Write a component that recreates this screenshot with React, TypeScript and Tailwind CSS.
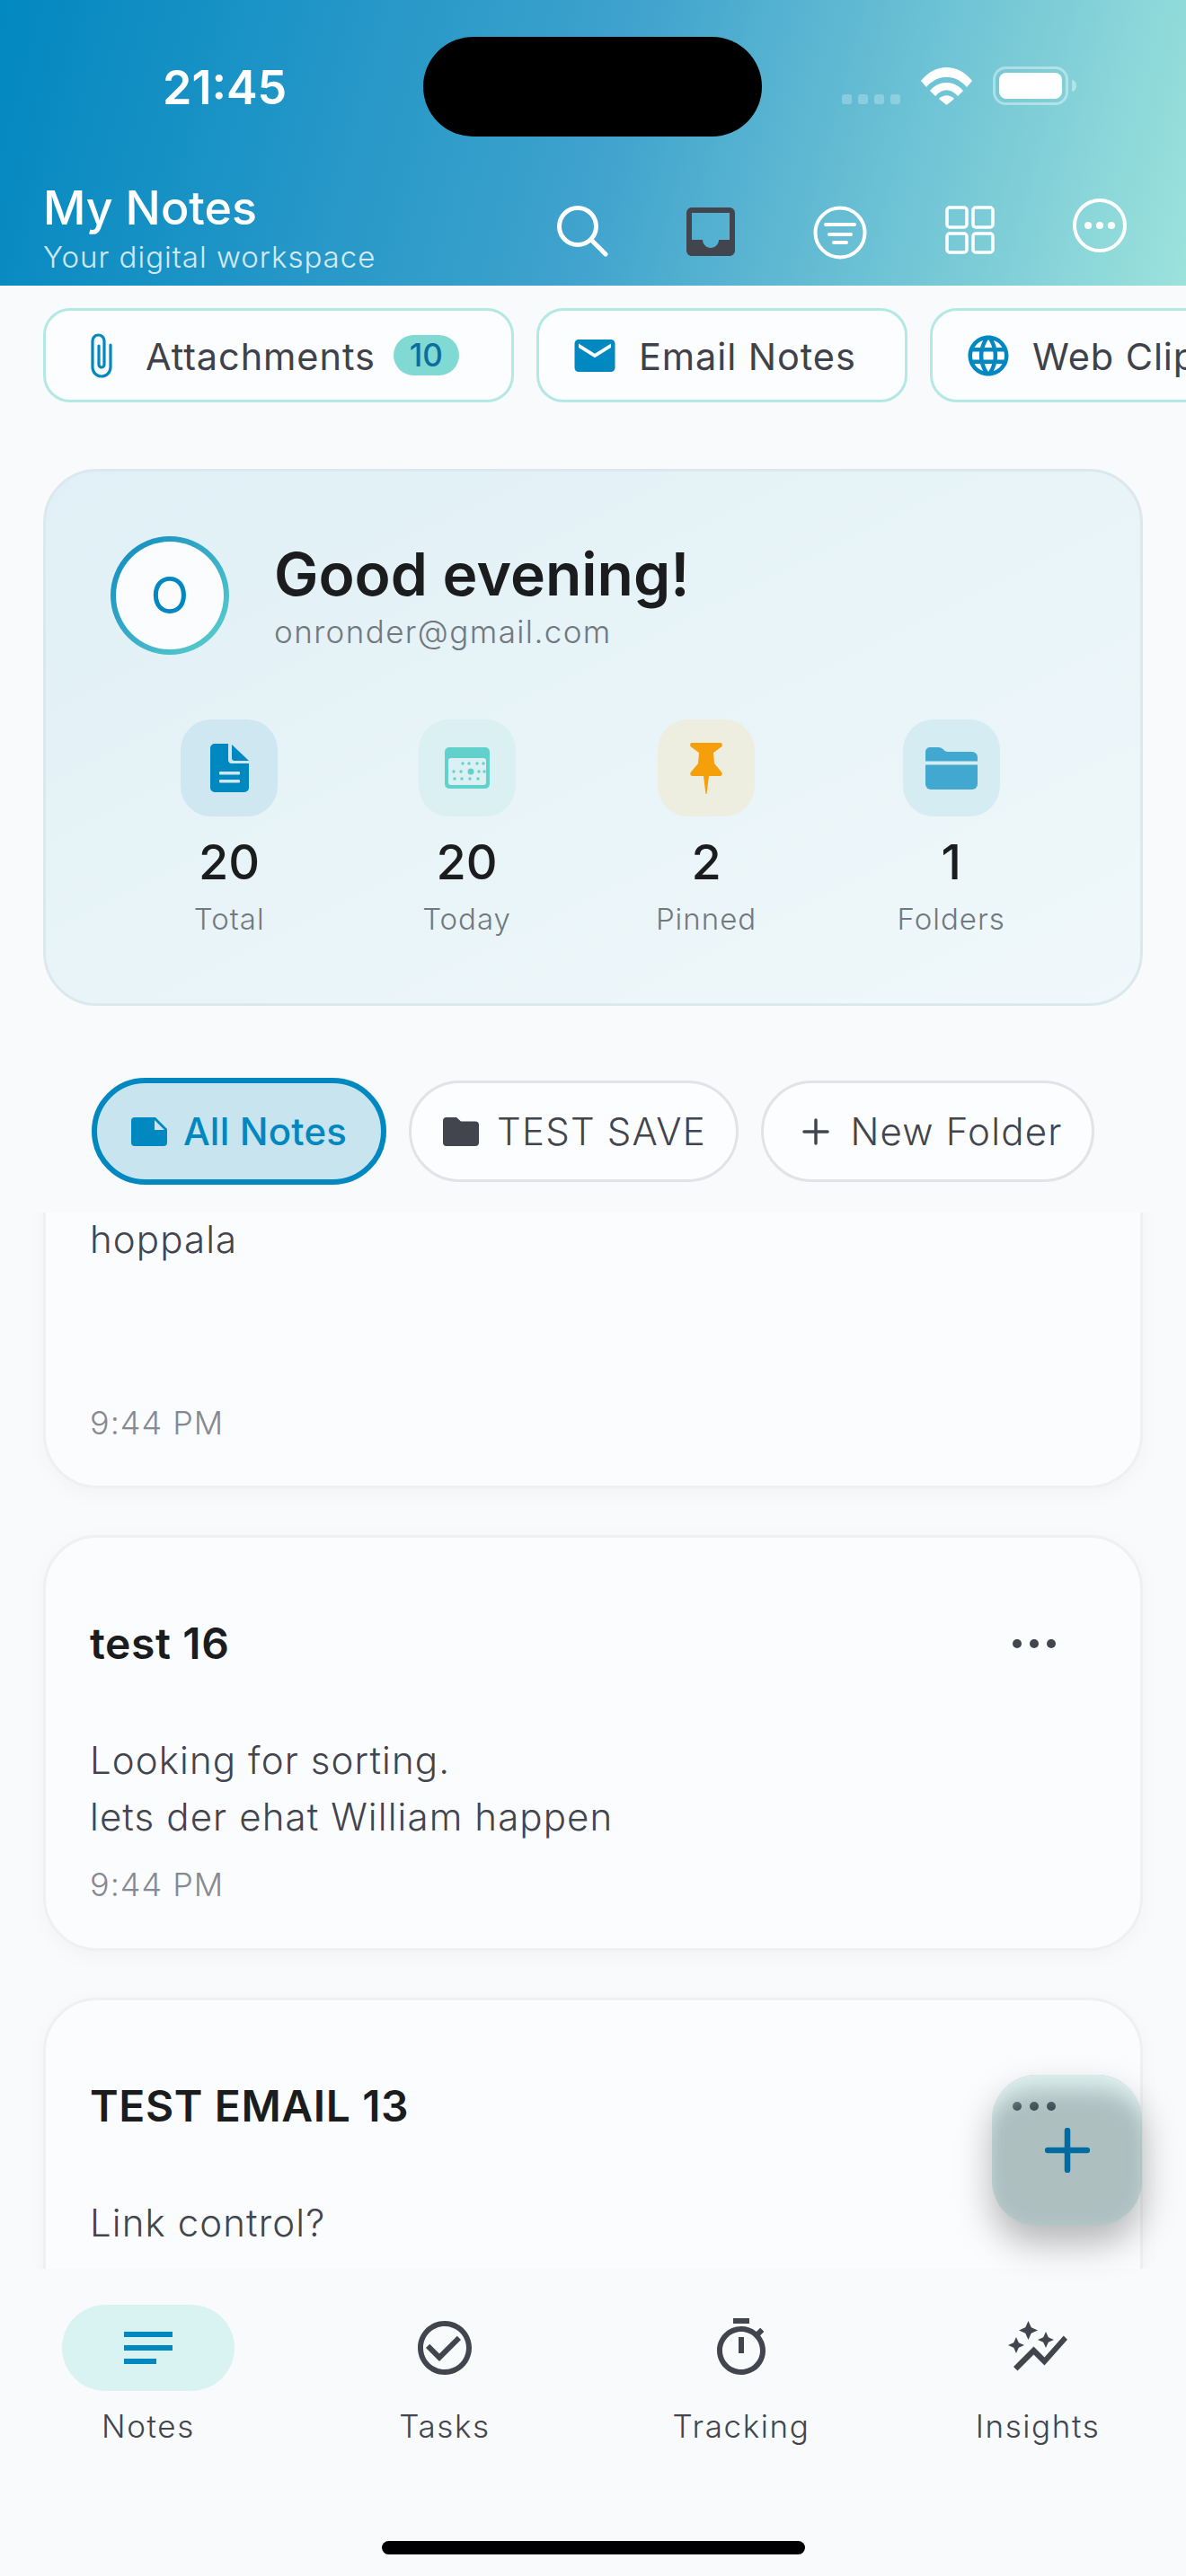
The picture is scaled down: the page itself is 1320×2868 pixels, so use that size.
import type { ReactNode } from 'react';
import { MdAutoGraph, MdCheckCircleOutline, MdEmail, MdInbox, MdLanguage, MdNotes, MdOutlineTimer } from 'react-icons/md';

function PaperclipIcon() {
  return (
    <svg width="24" height="50" viewBox="0 0 24 50" fill="none" stroke="#0288c0" strokeWidth="3.2" strokeLinecap="round">
      <path d="M9 14V35a3 3 0 0 0 6 0V8.5a6.5 6.5 0 0 0-13 0V38a10 10 0 0 0 20 0V13" />
    </svg>
  );
}

function WifiIcon() {
  return (
    <svg width="57" height="42" viewBox="0 0 57 42" fill="#ffffff">
      <path d="M0 15C16-5 41-5 57 15l-6 7C38 7 19 7 6 22Z" />
      <path d="M10 26C20 14 37 14 47 26l-6 6C33 23 24 23 16 32Z" />
      <path d="M20 35c5-5 12-5 17 0l-8.500 7Z" />
    </svg>
  );
}

function BatteryIcon() {
  return (
    <svg width="93" height="43" viewBox="0 0 93 43">
      <rect x="1.500" y="1.500" width="81" height="40" rx="13" fill="none" stroke="#ffffff" strokeOpacity="0.4" strokeWidth="3" />
      <rect x="7" y="7" width="70" height="29" rx="8" fill="#ffffff" />
      <path d="M88 15a5 6 0 0 1 5 6.500 5 6 0 0 1-5 6.500Z" fill="#ffffff" fillOpacity="0.4" />
    </svg>
  );
}

function SearchIcon() {
  return (
    <svg width="57" height="57" viewBox="0 0 57 57" fill="none" stroke="#ffffff" strokeWidth="5" strokeLinecap="round">
      <circle cx="23" cy="23" r="20.500" />
      <path d="M38 38l16 16" />
    </svg>
  );
}

function FilterIcon() {
  return (
    <svg width="60" height="60" viewBox="0 0 60 60" fill="none" stroke="#ffffff" strokeWidth="4" strokeLinecap="round">
      <circle cx="30" cy="30" r="27.500" />
      <path d="M14 21h32M18 32h24M23 41h14" />
    </svg>
  );
}

function GridIcon() {
  return (
    <svg width="55" height="54" viewBox="0 0 55 54" fill="none" stroke="#ffffff" strokeWidth="3.500">
      <rect x="2" y="2" width="22" height="22" rx="3" />
      <rect x="31" y="2" width="22" height="22" rx="3" />
      <rect x="2" y="31" width="22" height="21" rx="3" />
      <rect x="31" y="31" width="22" height="21" rx="3" />
    </svg>
  );
}

function MoreCircleIcon() {
  return (
    <svg width="60" height="60" viewBox="0 0 60 60">
      <circle cx="30" cy="30" r="28" fill="none" stroke="#ffffff" strokeWidth="4" />
      <circle cx="17" cy="30" r="4" fill="#ffffff" />
      <circle cx="30" cy="30" r="4" fill="#ffffff" />
      <circle cx="43" cy="30" r="4" fill="#ffffff" />
    </svg>
  );
}

function DocIcon() {
  return (
    <svg width="43" height="54" viewBox="0 0 43 54" fill="#0288c0">
      <path d="M5 0H20V18a4 4 0 0 0 4 4H43V49a5 5 0 0 1-5 5H5a5 5 0 0 1-5-5V5a5 5 0 0 1 5-5Z" />
      <path d="M24 1L43 19H27a3 3 0 0 1-3-3Z" />
      <rect x="10" y="31" width="23" height="3.500" rx="1" fill="#cfe7f1" />
      <rect x="10" y="40" width="23" height="3.500" rx="1" fill="#cfe7f1" />
    </svg>
  );
}

function CalendarIcon() {
  const dots = [
    [20, 18], [27, 18], [36, 18], [43, 18],
    [10, 27], [18, 27], [38, 27], [44, 27],
    [11, 35], [19, 35], [28, 35], [37, 35],
  ];
  return (
    <svg width="50" height="46" viewBox="0 0 50 46" fill="#62d1cb">
      <rect width="50" height="46" rx="5" />
      <rect x="4" y="12" width="42" height="30" rx="3" fill="#dbf0f3" />
      {dots.map(([cx, cy]) => (
        <circle key={`${cx}-${cy}`} cx={cx} cy={cy} r="1.700" />
      ))}
      <circle cx="29" cy="27" r="3.500" />
    </svg>
  );
}

function PinIcon() {
  return (
    <svg width="36" height="57" viewBox="0 0 36 57" fill="#f59f0a">
      <path d="M2 0H34c2 0 2.500 3 1 4.500L26 11 27 23l8 9.500c1.500 2 .5 4.500-1.500 4.500H21L18.500 57h-1L15 37H2.500C.5 37-.5 34.500 1 32.500L9 23 10 11 1 4.500C-.5 3 0 0 2 0Z" />
    </svg>
  );
}

function FolderStripeIcon() {
  return (
    <svg width="58" height="47" viewBox="0 0 58 47" fill="#43a8d0">
      <path d="M5 0H14c3 0 4.500 1 6 2.500S22.500 5 25 5H52a6 6 0 0 1 6 6V15.500H0V5a5 5 0 0 1 5-5Z" />
      <path d="M0 19.500H58V41a6 6 0 0 1-6 6H6a6 6 0 0 1-6-6Z" />
    </svg>
  );
}

function NoteFillIcon() {
  return (
    <svg width="40" height="32" viewBox="0 0 40 32">
      <path d="M4 0H27L40 13V28a4 4 0 0 1-4 4H4a4 4 0 0 1-4-4V4a4 4 0 0 1 4-4Z" fill="#0288c0" />
      <path d="M26 3L37 14H26Z" fill="#c7e4ef" />
    </svg>
  );
}

function FolderFillIcon() {
  return (
    <svg width="40" height="32" viewBox="0 0 40 32" fill="#42454d">
      <path d="M4 0H15l5 4.500H36a4 4 0 0 1 4 4V28a4 4 0 0 1-4 4H4a4 4 0 0 1-4-4V4a4 4 0 0 1 4-4Z" />
    </svg>
  );
}

function PlusIcon() {
  return (
    <svg width="30" height="30" viewBox="0 0 30 30" fill="none" stroke="#42454d" strokeWidth="3.500" strokeLinecap="round">
      <path d="M15 2V28M2 15H28" />
    </svg>
  );
}

function DotsIcon() {
  return (
    <svg width="48" height="10" viewBox="0 0 48 10" fill="#42454d">
      <circle cx="5" cy="5" r="5" />
      <circle cx="24" cy="5" r="5" />
      <circle cx="43" cy="5" r="5" />
    </svg>
  );
}

function FilterChip({ icon, label, badge, width }: { icon: ReactNode; label: string; badge?: string; width: string }) {
  return (
    <div className={`flex h-[105px] shrink-0 items-center rounded-[30px] border-[3px] border-[#b4e8e5] bg-[#fcfdfe] pl-[35px] ${width}`}>
      <span className="flex w-[54px] justify-center text-[#0288c0]">{icon}</span>
      <span className="ml-[22px] whitespace-nowrap pt-[3px] text-[41.500px] tracking-[0.9px] text-[#3f424a]">{label}</span>
      {badge && (
        <span className="ml-[20px] flex h-[45px] w-[73px] items-center justify-center rounded-full bg-[#80d9d2] text-[35px] font-medium text-[#0b6e9f]">
          {badge}
        </span>
      )}
    </div>
  );
}

function Stat({ icon, tint, value, label }: { icon: ReactNode; tint: string; value: string; label: string }) {
  return (
    <div className="flex flex-col items-center">
      <div className={`flex h-[108px] w-[108px] items-center justify-center rounded-[34px] ${tint}`}>{icon}</div>
      <div className="mt-[19px] text-[54px] leading-[64px] font-medium text-[#1a1c1e]">{value}</div>
      <div className="mt-[11px] text-[33px] leading-[40px] font-light tracking-[1px] text-[#72787f]">{label}</div>
    </div>
  );
}

function NoteTitle({ title }: { title: string }) {
  return (
    <div className="flex h-[60px] items-center justify-between pr-[94px]">
      <span className="text-[48px] font-semibold tracking-[0.6px] text-[#1a1c1e]">{title}</span>
      <DotsIcon />
    </div>
  );
}

function NavItem({ icon, label, active }: { icon: ReactNode; label: string; active?: boolean }) {
  return (
    <div className="flex flex-col items-center">
      <div className={`flex h-[96px] w-[192px] items-center justify-center rounded-full ${active ? 'bg-[#d9f3f2] text-[#0288c0]' : 'text-[#42454d]'}`}>
        {icon}
      </div>
      <span className="mt-[17px] text-[35px] leading-[44px] font-light tracking-[1.6px] text-[#42454d]">{label}</span>
    </div>
  );
}

export default function App() {
  return (
    <div className="relative flex h-[2868px] w-[1320px] flex-col overflow-hidden bg-[#f9fafc] font-['Inter',sans-serif]">
      <header className="h-[318px] shrink-0 bg-[linear-gradient(105deg,#0288c0_0%,#3ea2cd_50%,#9ce2dc_100%)] pt-[41px]">
        <div className="flex h-[111px] items-center pl-[181px]">
          <span className="w-[290px] pt-[3px] text-[52px] font-semibold text-white">21:45</span>
          <div className="h-[111px] w-[377px] rounded-full bg-black" />
          <div className="ml-[89px] flex items-end gap-[23px] pb-[2px]">
            <div className="flex gap-[7px] pb-px">
              <i className="h-[11px] w-[11px] rounded-[3px] bg-white/25" />
              <i className="h-[11px] w-[11px] rounded-[3px] bg-white/25" />
              <i className="h-[11px] w-[11px] rounded-[3px] bg-white/25" />
              <i className="h-[11px] w-[11px] rounded-[3px] bg-white/25" />
            </div>
            <WifiIcon />
            <BatteryIcon />
          </div>
        </div>
        <div className="mt-[50px] flex items-start justify-between pl-[48px] pr-[66px]">
          <div>
            <div className="text-[52px] leading-[60px] font-medium text-white">My Notes</div>
            <div className="mt-[4px] text-[33px] leading-[40px] font-light tracking-[1px] text-white/80">Your digital workspace</div>
          </div>
          <div className="mt-[27px] flex items-start gap-[87px]">
            <SearchIcon />
            <MdInbox size={72} color="#42454d" className="-mx-[9px] -my-[7px]" />
            <FilterIcon />
            <GridIcon />
            <div className="-mt-[8px]">
              <MoreCircleIcon />
            </div>
          </div>
        </div>
      </header>

      <div className="mt-[25px] flex shrink-0 gap-[25px] pl-[48px]">
        <FilterChip icon={<PaperclipIcon />} label="Attachments" badge="10" width="w-[524px]" />
        <FilterChip icon={<MdEmail size={54} />} label="Email Notes" width="w-[413px]" />
        <FilterChip icon={<MdLanguage size={54} />} label="Web Clips" width="w-[380px]" />
      </div>

      <section className="mx-[48px] mt-[74px] h-[598px] shrink-0 rounded-[60px] border-[3px] border-[#dbe9ee] bg-gradient-to-br from-[#e0f0f6] to-[#f0f8fa] px-[72px] pt-[72px]">
        <div className="flex items-start gap-[50px]">
          <div className="h-[132px] w-[132px] rounded-full bg-gradient-to-br from-[#0288c0] to-[#5ed1cd] p-[6px]">
            <div className="flex h-full w-full items-center justify-center rounded-full bg-[#fbfcfe] text-[56px] text-[#0288c0]">O</div>
          </div>
          <div className="pt-[2px]">
            <div className="text-[66px] leading-[80px] font-semibold text-[#1a1c1e]">Good evening!</div>
            <div className="mt-[2px] text-[35px] leading-[44px] font-light tracking-[1.4px] text-[#72787f]">onronder@gmail.com</div>
          </div>
        </div>
        <div className="mt-[72px] flex justify-around">
          <Stat icon={<DocIcon />} tint="bg-[#cfe7f1]" value="20" label="Total" />
          <Stat icon={<CalendarIcon />} tint="bg-[#dbf0f3]" value="20" label="Today" />
          <Stat icon={<PinIcon />} tint="bg-[#edeee0]" value="2" label="Pinned" />
          <Stat icon={<FolderStripeIcon />} tint="bg-[#d6ecf3]" value="1" label="Folders" />
        </div>
      </section>

      <div className="mt-[80px] flex h-[119px] shrink-0 items-center gap-[25px] pl-[102px]">
        <div className="flex h-[119px] w-[328px] items-center justify-center gap-[18px] rounded-full border-[6px] border-[#0288c0] bg-[#c7e4ef] text-[42px] font-medium tracking-[0.2px] text-[#0288c0]">
          <NoteFillIcon />
          All Notes
        </div>
        <div className="flex h-[113px] w-[367px] items-center justify-center gap-[20px] rounded-full border-[3px] border-[#e1e3e6] bg-[#fcfdfe] pl-[2px] text-[42px] font-light tracking-[1.2px] text-[#42454d]">
          <FolderFillIcon />
          TEST SAVE
        </div>
        <div className="flex h-[113px] w-[371px] items-center justify-center gap-[24px] rounded-full border-[3px] border-[#e1e3e6] bg-[#fcfdfe] pl-[10px] text-[42px] font-light tracking-[1.2px] text-[#42454d]">
          <PlusIcon />
          New Folder
        </div>
      </div>

      <main className="mt-[31px] h-[1176px] shrink-0 overflow-hidden px-[48px]">
        <article className="-mt-[60px] h-[367px] rounded-b-[60px] border-x-[3px] border-b-[3px] border-[#eef0f2] bg-[#fbfcfe] pl-[49px] pt-[58px] shadow-[0_6px_24px_rgba(0,0,0,0.03)]">
          <p className="text-[42px] leading-[63px] font-light tracking-[1.1px] text-[#42454d]">hoppala</p>
          <p className="mt-[149px] text-[36px] leading-[48px] font-light tracking-[1px] text-[#858a90]">9:44 PM</p>
        </article>

        <article className="mt-[52px] h-[463px] rounded-[60px] border-[3px] border-[#eef0f2] bg-[#fbfcfe] pl-[49px] pt-[88px] shadow-[0_6px_24px_rgba(0,0,0,0.03)]">
          <NoteTitle title="test 16" />
          <p className="mt-[68px] text-[42px] leading-[63px] font-light tracking-[1.1px] text-[#42454d]">
            Looking for sorting.
            <br />
            lets der ehat William happen
          </p>
          <p className="mt-[20px] text-[36px] leading-[48px] font-light tracking-[1px] text-[#858a90]">9:44 PM</p>
        </article>

        <article className="mt-[52px] h-[463px] rounded-[60px] border-[3px] border-[#eef0f2] bg-[#fbfcfe] pl-[49px] pt-[88px] shadow-[0_6px_24px_rgba(0,0,0,0.03)]">
          <NoteTitle title="TEST EMAIL 13" />
          <p className="mt-[68px] text-[42px] leading-[63px] font-light tracking-[1.1px] text-[#42454d]">Link control?</p>
        </article>
      </main>

      <nav className="flex flex-1 flex-col bg-[#f9fafc] pt-[40px]">
        <div className="grid grid-cols-4">
          <NavItem active icon={<MdNotes size={72} />} label="Notes" />
          <NavItem icon={<MdCheckCircleOutline size={72} />} label="Tasks" />
          <NavItem icon={<MdOutlineTimer size={72} />} label="Tracking" />
          <NavItem icon={<MdAutoGraph size={72} />} label="Insights" />
        </div>
        <div className="mx-auto mt-[106px] h-[15px] w-[471px] rounded-full bg-black" />
      </nav>

      <button className="absolute left-[1104px] top-[2310px] flex h-[168px] w-[167px] items-center justify-center rounded-[50px] bg-[#2b5656]/[0.37] shadow-[inset_0_30px_26px_-14px_rgba(224,242,240,0.95),inset_0_0_18px_rgba(214,236,234,0.3),0_20px_40px_rgba(0,0,0,0.28)]">
        <svg width="50" height="50" viewBox="0 0 50 50" fill="none" stroke="#006b9f" strokeWidth="6.500" strokeLinecap="round">
          <path d="M25 3V47M3 25H47" />
        </svg>
      </button>
    </div>
  );
}
